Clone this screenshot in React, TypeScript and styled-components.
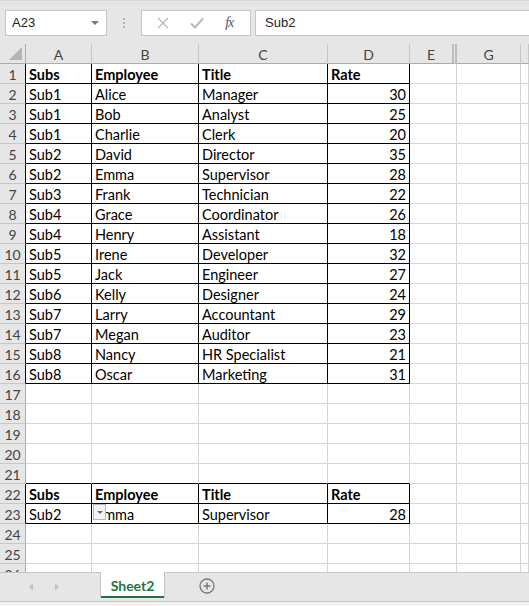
import styled, { createGlobalStyle } from "styled-components";

const GlobalStyle = createGlobalStyle`
  html, body {
    margin: 0;
    padding: 0;
    background: #ffffff;
    overflow: hidden;
  }
`;

const COLS = "26px 66px 107px 129px 82px 47px 64px 1fr";
const CELL_FONT = `"Lato", "Liberation Sans", sans-serif`;
const UI_FONT = `"Liberation Sans", "DejaVu Sans", sans-serif`;

const Window = styled.div`
  width: 529px;
  height: 606px;
  display: flex;
  flex-direction: column;
  background: #e6e6e6;
  overflow: hidden;
`;

// 数式バー
const FormulaBar = styled.div`
  height: 44px;
  flex: none;
  display: flex;
  align-items: center;
  padding: 0 0 0 5px;
  gap: 4px;
  box-sizing: border-box;
  border-top: 1px solid #d8d8d8;
  font-family: ${UI_FONT};
`;

const Box = styled.div<{ $w?: number }>`
  height: 26px;
  box-sizing: border-box;
  background: #ffffff;
  border: 1px solid #c6c6c6;
  display: flex;
  align-items: center;
  width: ${(p) => (p.$w ? `${p.$w}px` : "auto")};
  flex: ${(p) => (p.$w ? "none" : "1")};
`;

const NameText = styled.span`
  flex: 1;
  padding-left: 6px;
  font-size: 13px;
  color: #222;
`;

const Caret = styled.span`
  width: 0;
  height: 0;
  margin-right: 7px;
  border-left: 4px solid transparent;
  border-right: 4px solid transparent;
  border-top: 4px solid #7a7a7a;
`;

const Grip = styled.div`
  width: 26px;
  flex: none;
  display: flex;
  flex-direction: column;
  align-items: center;
  gap: 2px;
`;

const Dot = styled.span`
  width: 2px;
  height: 2px;
  background: #b4b4b4;
`;

const FxButtons = styled.div`
  display: flex;
  align-items: center;
  justify-content: space-around;
  width: 100%;
  padding: 0 6px 0 4px;
  color: #b9b9b9;
`;

const FxLabel = styled.span`
  font-family: "Liberation Serif", serif;
  font-style: italic;
  font-size: 14px;
  color: #555;
  letter-spacing: -1px;
`;

const FormulaText = styled.span`
  padding-left: 9px;
  font-size: 13px;
  color: #222;
`;

// シート
const Sheet = styled.div`
  flex: 1;
  display: flex;
  flex-direction: column;
  background: #ffffff;
  overflow: hidden;
`;

const Row = styled.div<{ $h?: number }>`
  display: grid;
  grid-template-columns: ${COLS};
  height: ${(p) => p.$h ?? 20}px;
  flex: none;
  overflow: hidden;
`;

const HeadCell = styled.div<{ $hidden?: boolean }>`
  background: #e6e6e6;
  border-right: ${(p) => (p.$hidden ? "5px double #bdbdbd" : "1px solid #c6c6c6")};
  border-bottom: 1px solid #ababab;
  box-sizing: border-box;
  display: flex;
  align-items: center;
  justify-content: center;
  padding-top: 1px;
  font-family: ${CELL_FONT};
  font-size: 14px;
  color: #444;
`;

const Corner = styled(HeadCell)`
  position: relative;
  border-right-color: #ababab;

  &::after {
    content: "";
    position: absolute;
    right: 3px;
    bottom: 3px;
    border-left: 13px solid transparent;
    border-bottom: 13px solid #b4b4b4;
  }
`;

const RowHead = styled.div<{ $edge?: boolean }>`
  background: #e6e6e6;
  border-right: 1px solid ${(p) => (p.$edge ? "#000" : "#ababab")};
  border-bottom: 1px solid #c6c6c6;
  box-sizing: border-box;
  height: 20px;
  line-height: 21px;
  text-align: center;
  font-family: ${CELL_FONT};
  font-size: 14px;
  color: #444;
`;

const Cell = styled.div<{ $bold?: boolean; $num?: boolean; $edgeR?: boolean; $edgeB?: boolean }>`
  position: relative;
  box-sizing: border-box;
  height: 20px;
  border-right: 1px solid ${(p) => (p.$edgeR ? "#000" : "#d4d4d4")};
  border-bottom: 1px solid ${(p) => (p.$edgeB ? "#000" : "#d4d4d4")};
  padding: 0 3px;
  line-height: 21px;
  white-space: nowrap;
  overflow: hidden;
  text-align: ${(p) => (p.$num ? "right" : "left")};
  font-family: ${CELL_FONT};
  font-size: 14.5px;
  font-weight: ${(p) => (p.$bold ? 700 : 400)};
  color: #000;
`;

const DropButton = styled.span`
  position: absolute;
  left: 1px;
  top: 0;
  width: 13px;
  height: 16px;
  box-sizing: border-box;
  background: #f4f4f4;
  border: 1px solid #b8b8b8;
  display: flex;
  align-items: center;
  justify-content: center;

  &::after {
    content: "";
    border-left: 3px solid transparent;
    border-right: 3px solid transparent;
    border-top: 3px solid #6e6e6e;
  }
`;

// シートタブ
const TabBar = styled.div`
  height: 30px;
  flex: none;
  display: flex;
  align-items: stretch;
  background: #e6e6e6;
  border-top: 1px solid #c6c6c6;
  border-bottom: 1px solid #c6c6c6;
  box-sizing: border-box;
`;

const NavArrows = styled.div`
  width: 100px;
  display: flex;
  align-items: center;
  justify-content: center;
  gap: 22px;
  padding-right: 12px;
  box-sizing: border-box;
`;

const Arrow = styled.span<{ $dir: "left" | "right" }>`
  width: 0;
  height: 0;
  border-top: 4px solid transparent;
  border-bottom: 4px solid transparent;
  ${(p) =>
    p.$dir === "left"
      ? "border-right: 4px solid #c4c4c4;"
      : "border-left: 4px solid #c4c4c4;"}
`;

const Tab = styled.div`
  width: 65px;
  margin-top: -1px;
  background: #ffffff;
  border-left: 1px solid #c6c6c6;
  border-right: 1px solid #c6c6c6;
  box-sizing: border-box;
  display: flex;
  align-items: center;
  justify-content: center;
  font-family: ${CELL_FONT};
  font-weight: 700;
  font-size: 14px;
  color: #217346;
  position: relative;
  height: 26px;

  &::after {
    content: "";
    position: absolute;
    left: 0;
    right: 0;
    bottom: 0;
    height: 2px;
    background: #217346;
  }
`;

const AddSheet = styled.div`
  display: flex;
  align-items: center;
  padding-left: 34px;
  padding-bottom: 2px;
`;

const StatusStrip = styled.div`
  height: 4px;
  flex: none;
  background: #f1f1f1;
`;

const data: [string, string, string, number][] = [
  ["Sub1", "Alice", "Manager", 30],
  ["Sub1", "Bob", "Analyst", 25],
  ["Sub1", "Charlie", "Clerk", 20],
  ["Sub2", "David", "Director", 35],
  ["Sub2", "Emma", "Supervisor", 28],
  ["Sub3", "Frank", "Technician", 22],
  ["Sub4", "Grace", "Coordinator", 26],
  ["Sub4", "Henry", "Assistant", 18],
  ["Sub5", "Irene", "Developer", 32],
  ["Sub5", "Jack", "Engineer", 27],
  ["Sub6", "Kelly", "Designer", 24],
  ["Sub7", "Larry", "Accountant", 29],
  ["Sub7", "Megan", "Auditor", 23],
  ["Sub8", "Nancy", "HR Specialist", 21],
  ["Sub8", "Oscar", "Marketing", 31],
];

type Line = { cells: (string | number)[]; bold?: boolean; boxed?: boolean; above?: boolean; drop?: boolean };

const headers = ["Subs", "Employee", "Title", "Rate"];

const lines: Line[] = [
  { cells: headers, bold: true, boxed: true },
  ...data.map((d) => ({ cells: d, boxed: true })),
  { cells: [] },
  { cells: [] },
  { cells: [] },
  { cells: [] },
  { cells: [], above: true },
  { cells: headers, bold: true, boxed: true },
  { cells: ["Sub2", "Emma", "Supervisor", 28], boxed: true, drop: true },
  { cells: [] },
  { cells: [] },
  { cells: [] },
];

const App = () => {
  return (
    <Window>
      <GlobalStyle />
      <FormulaBar>
        <Box $w={102}>
          <NameText>A23</NameText>
          <Caret />
        </Box>
        <Grip>
          <Dot />
          <Dot />
          <Dot />
        </Grip>
        <Box $w={110}>
          <FxButtons>
            <svg width="12" height="12" viewBox="0 0 12 12">
              <path d="M1 1 L11 11 M11 1 L1 11" stroke="currentColor" strokeWidth="1.3" />
            </svg>
            <svg width="14" height="12" viewBox="0 0 14 12">
              <path d="M1 6.5 L5 10.5 L13 1.5" stroke="currentColor" strokeWidth="2" fill="none" />
            </svg>
            <FxLabel>fx</FxLabel>
          </FxButtons>
        </Box>
        <Box style={{ marginRight: -4 }}>
          <FormulaText>Sub2</FormulaText>
        </Box>
      </FormulaBar>

      <Sheet>
        <Row>
          <Corner />
          {["A", "B", "C", "D", "E", "G", ""].map((c) => (
            <HeadCell key={c} $hidden={c === "E"}>
              {c}
            </HeadCell>
          ))}
        </Row>
        {lines.map((line, i) => (
          <Row key={i} $h={i === lines.length - 1 ? 8 : 20}>
            <RowHead $edge={line.boxed}>{i + 1}</RowHead>
            {Array.from({ length: 7 }).map((_, c) => {
              const v = line.cells[c];
              const inTable = c < 4;
              return (
                <Cell
                  key={c}
                  $bold={line.bold}
                  $num={typeof v === "number"}
                  $edgeR={line.boxed && inTable}
                  $edgeB={(line.boxed || line.above) && inTable}
                >
                  {line.drop && c === 1 && <DropButton />}
                  {v}
                </Cell>
              );
            })}
          </Row>
        ))}
      </Sheet>

      <TabBar>
        <NavArrows>
          <Arrow $dir="left" />
          <Arrow $dir="right" />
        </NavArrows>
        <Tab>Sheet2</Tab>
        <AddSheet>
          <svg width="16" height="16" viewBox="0 0 16 16">
            <circle cx="8" cy="8" r="7" stroke="#7a7a7a" strokeWidth="1.3" fill="none" />
            <path d="M8 4.5 V11.5 M4.5 8 H11.5" stroke="#7a7a7a" strokeWidth="1.5" />
          </svg>
        </AddSheet>
      </TabBar>
      <StatusStrip />
    </Window>
  );
};

export default App;
